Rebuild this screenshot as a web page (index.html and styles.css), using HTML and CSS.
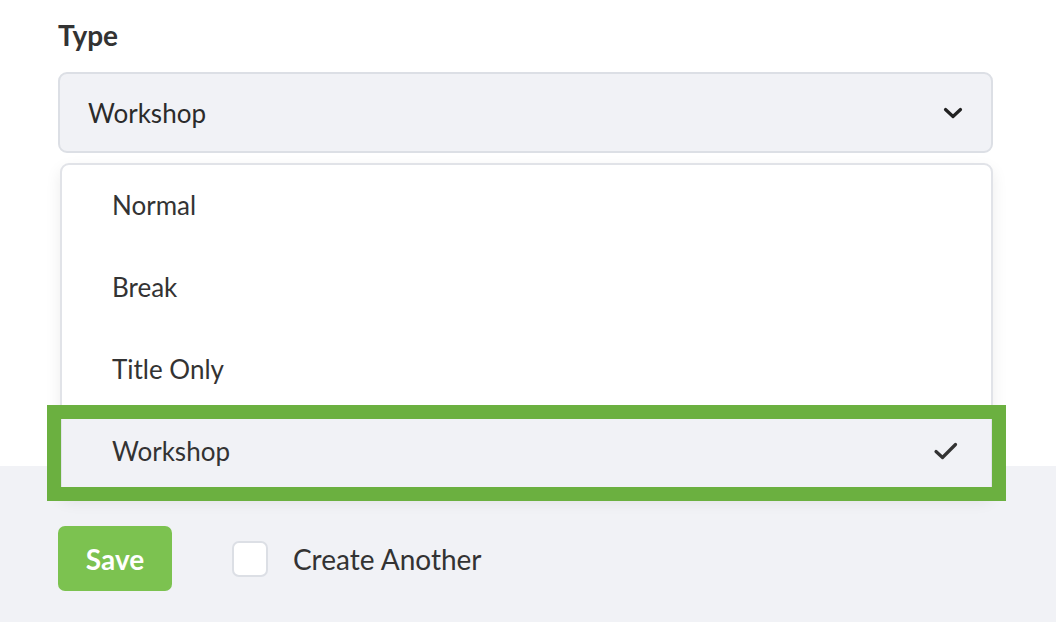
FILE: index.html
```html
<!DOCTYPE html>
<html lang="en">
<head>
<meta charset="utf-8">
<title>Type</title>
<link rel="stylesheet" href="styles.css">
</head>
<body>
<div class="form">
  <div class="field-label">Type</div>
  <div class="select-wrap">
    <div class="select">
      <span class="select-value">Workshop</span>
      <svg class="chevron" width="20" height="12" viewBox="0 0 20 12"><path d="M2.5 2.5 L10 9.5 L17.5 2.5" fill="none" stroke="#222" stroke-width="3.2" stroke-linecap="round" stroke-linejoin="round"/></svg>
    </div>
    <ul class="menu">
      <li class="item">Normal</li>
      <li class="item">Break</li>
      <li class="item">Title Only</li>
      <li class="item selected">Workshop
        <svg class="check" width="26" height="20" viewBox="0 0 26 20"><path d="M3 10.5 L9.5 16.5 L22.5 3.5" fill="none" stroke="#333" stroke-width="3.2" stroke-linecap="round" stroke-linejoin="round"/></svg>
        <span class="highlight"></span>
      </li>
    </ul>
  </div>
</div>
<div class="actions">
  <button class="save">Save</button>
  <label class="checkbox-row">
    <span class="checkbox"></span>
    <span class="checkbox-text">Create Another</span>
  </label>
</div>
</body>
</html>
```
FILE: styles.css
```css
html, body {
  margin: 0;
  padding: 0;
  background: #ffffff;
  font-family: Lato, "Open Sans", sans-serif;
  color: #333333;
}

.form {
  box-sizing: border-box;
  height: 466px;
  padding: 18px 63px 0 58px;
}

.field-label {
  font-size: 28px;
  font-weight: 700;
  line-height: 34px;
  height: 34px;
  margin-bottom: 20px;
  color: #333;
}

.select-wrap {
  position: relative;
}

.select {
  box-sizing: border-box;
  height: 81px;
  border: 2px solid #dcdfe5;
  border-radius: 9px;
  background: #f1f2f6;
  display: flex;
  align-items: center;
  justify-content: space-between;
  padding: 0 28px 0 28px;
  font-size: 26px;
  color: #2b2b2b;
}

.select-value {
  line-height: 32px;
}

.chevron {
  display: block;
}

.menu {
  position: absolute;
  top: 91px;
  left: 2px;
  right: 0;
  margin: 0;
  padding: 0;
  list-style: none;
  background: #ffffff;
  border: 2px solid #e1e3e8;
  border-radius: 9px;
  box-shadow: 0 6px 16px rgba(0, 0, 0, 0.08);
  z-index: 2;
}

.item {
  box-sizing: border-box;
  position: relative;
  height: 82px;
  display: flex;
  align-items: center;
  justify-content: space-between;
  padding: 0 32px 3px 50px;
  font-size: 26px;
  color: #333;
}

.item.selected {
  background: #f1f2f6;
}

.check {
  display: block;
  margin-top: 1px;
}

.highlight {
  position: absolute;
  left: -15px;
  top: -6px;
  width: 931px;
  height: 68px;
  border: 14px solid #6bb040;
  pointer-events: none;
}

.actions {
  box-sizing: border-box;
  height: 156px;
  background: #f1f2f6;
  display: flex;
  align-items: flex-start;
  padding: 60px 58px 0 58px;
  gap: 60px;
}

.save {
  width: 114px;
  height: 65px;
  border: none;
  border-radius: 7px;
  background: #7cc250;
  color: #ffffff;
  font-family: Lato, "Open Sans", sans-serif;
  font-size: 28px;
  font-weight: 700;
  padding: 0;
}

.checkbox-row {
  display: flex;
  align-items: center;
  gap: 25px;
  height: 65px;
}

.checkbox {
  box-sizing: border-box;
  width: 36px;
  height: 36px;
  border: 2px solid #dcdfe5;
  border-radius: 7px;
  background: #ffffff;
}

.checkbox-text {
  font-size: 28px;
  color: #333;
}
```
